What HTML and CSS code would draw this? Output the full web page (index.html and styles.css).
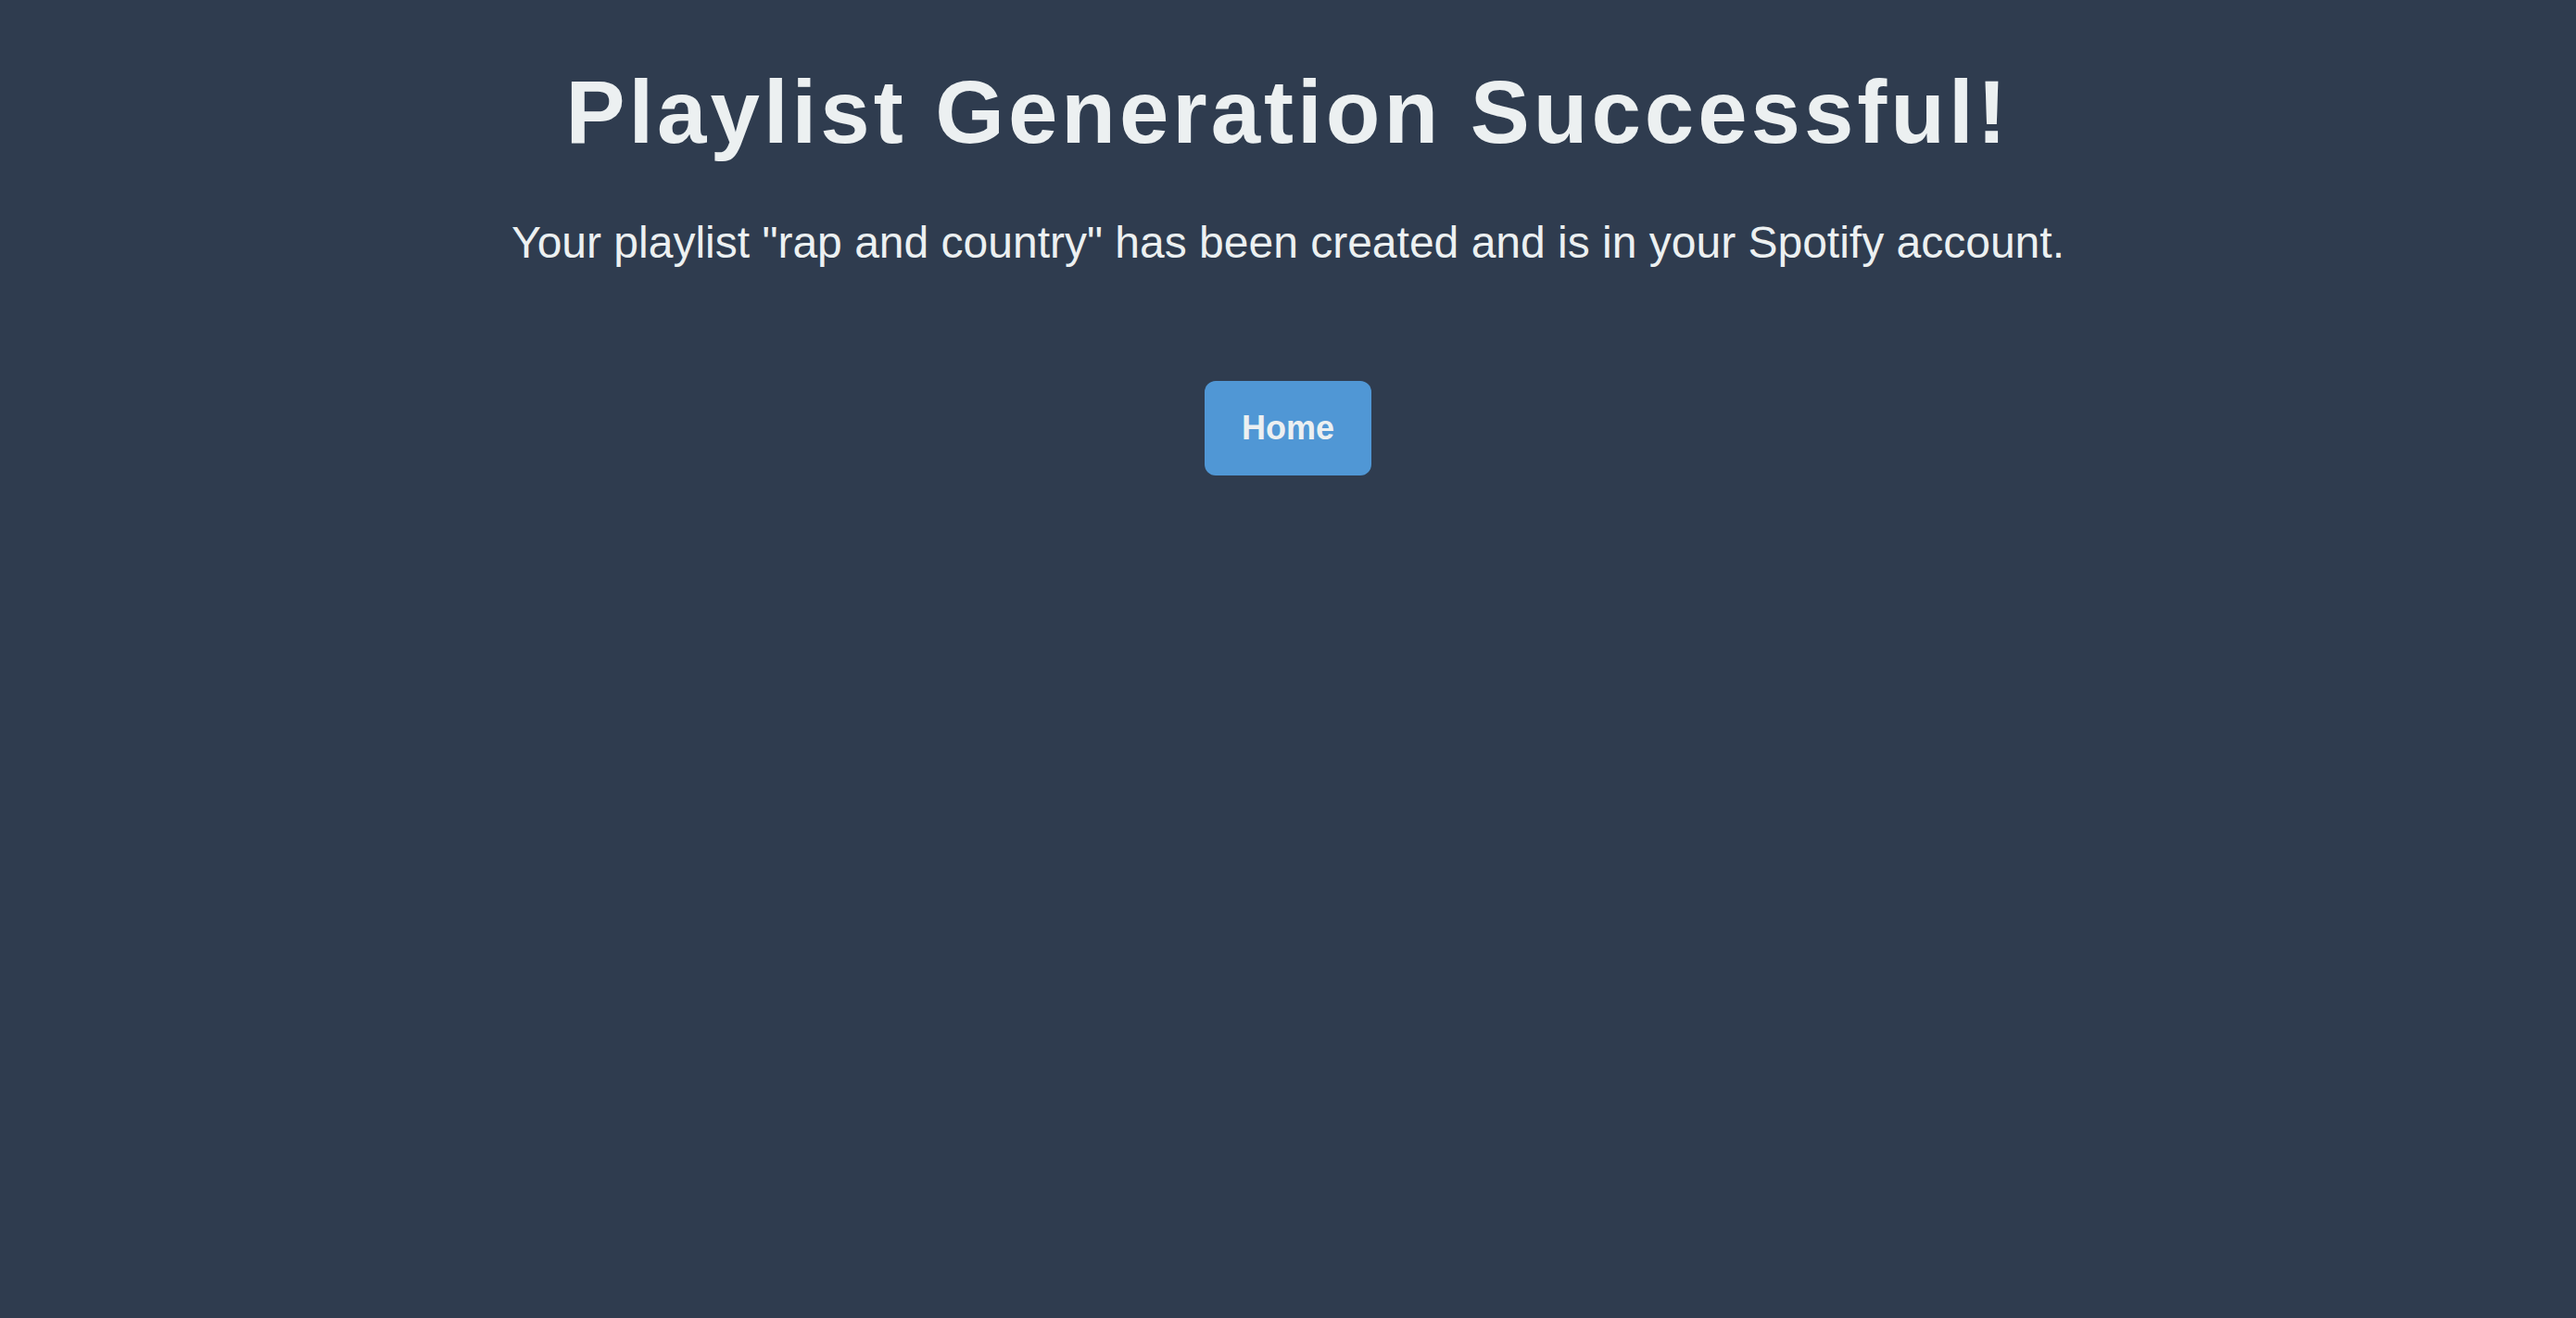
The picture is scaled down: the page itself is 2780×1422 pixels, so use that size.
FILE: index.html
```html
<!DOCTYPE html>
<html lang="en">
<head>
<meta charset="utf-8">
<title>Playlist Generated</title>
<link rel="stylesheet" href="styles.css">
</head>
<body>
<main class="page">
  <h1 class="title">Playlist Generation Successful!</h1>
  <p class="message">Your playlist "rap and country" has been created and is in your Spotify account.</p>
  <a class="home-button" href="#">Home</a>
</main>
</body>
</html>
```
FILE: styles.css
```css
html, body {
  margin: 0;
  padding: 0;
  height: 100%;
}
body {
  background: #2f3c4f;
  color: #ecf0f1;
  font-family: "Liberation Sans", Arial, sans-serif;
}
.page {
  display: flex;
  flex-direction: column;
  align-items: center;
  padding-top: 66px;
  text-align: center;
}
.title {
  margin: 0;
  font-size: 96px;
  font-weight: bold;
  letter-spacing: 4px;
  line-height: 110px;
}
.message {
  margin: 58px 0 0;
  font-size: 48px;
  line-height: 55px;
}
.home-button {
  margin-top: 122px;
  display: inline-block;
  padding: 30px 40px 31px;
  background: #5097d5;
  color: #ecf0f1;
  border-radius: 12px;
  font-size: 36px;
  font-weight: bold;
  line-height: 41px;
  text-decoration: none;
}
```
